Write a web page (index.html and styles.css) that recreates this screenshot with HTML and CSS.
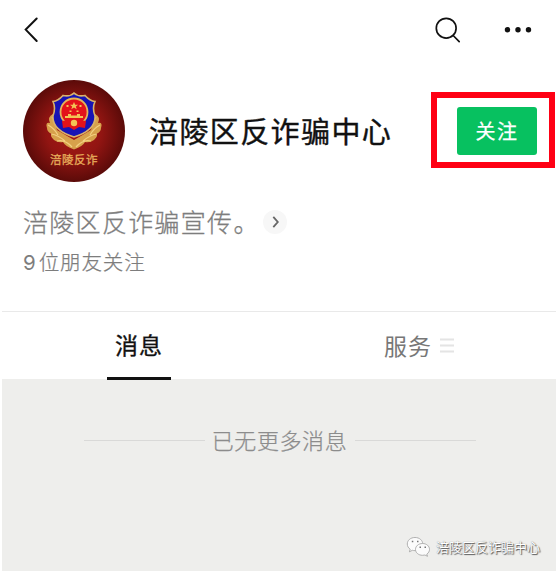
FILE: index.html
```html
<!DOCTYPE html>
<html lang="zh-CN">
<head>
<meta charset="utf-8">
<title>涪陵区反诈骗中心</title>
<link rel="stylesheet" href="styles.css">
</head>
<body>
<main class="page">
  <header class="navbar">
    <svg class="back" width="16" height="28" viewBox="0 0 16 28"><path d="M13.700 2.500 2.700 13.600 13.700 25"/></svg>
    <svg class="search" width="28" height="28" viewBox="0 0 28 28"><circle cx="12.200" cy="12.200" r="9.900"/><path d="m19.200 19.500 6 6.200"/></svg>
    <svg class="more" width="28" height="8" viewBox="0 0 28 8"><circle cx="3.500" cy="3.700" r="2.700"/><circle cx="14" cy="3.700" r="2.700"/><circle cx="24.500" cy="3.700" r="2.700"/></svg>
  </header>

  <section class="profile">
    <div class="avatar">
      <svg class="emblem" width="58" height="58" viewBox="0 0 58 58">
        <g class="wreath">
          <path d="M8 22Q2 25 5 31Q0 30 2 36Q2 40 7 42Q4 43 9 48Q13 51 18 50Q20 54 29 57.500Q38 54 40 50Q45 51 49 48Q54 43 51 42Q56 40 56 36Q58 30 53 31Q56 25 50 22L46 38 29 48 12 38Z"/>
          <path class="leaf" d="M3 33q6 3 10 10M6 42q7 1 14 7M12 49q8-2 15 6M55 33q-6 3-10 10M52 42q-7 1-14 7M46 49q-8-2-15 6M7 25q4 5 6 12M51 25q-4 5-6 12"/>
        </g>
        <path class="shield" d="M29 1Q33 5 40 3.500Q45 9 50 9.500Q47 16 50 24Q51 38 29 45Q7 38 8 24Q11 16 8 9.500Q13 9 18 3.500Q25 5 29 1Z"/>
        <circle class="disc" cx="29" cy="20" r="13.500"/>
        <path class="star" d="m29 10 1.200 2.700h2.900l-2.300 1.800.9 2.800-2.700-1.700-2.700 1.700.9-2.800-2.300-1.800h2.900Z"/>
        <path class="gold" d="M21.500 13h2v2h-2zm13 0h2v2h-2zM24.500 18.500h2V20h-2zm7 0h2V20h-2zM20 26v-2h3v-2h3v1.500h6V22h3v2h3v2z"/>
        <path class="ribbon" d="m17 29 7-1h10l7 1-1 7-6-1-5 3-5-3-6 1Z"/>
        <circle class="gear" cx="29" cy="31" r="3.200"/>
      </svg>
      <span class="avatar-text">涪陵反诈</span>
    </div>
    <h1 class="name">涪陵区反诈骗中心</h1>
    <div class="highlight"><button class="follow">关注</button></div>
  </section>

  <section class="about">
    <p class="desc"><span>涪陵区反诈骗宣传。</span><span class="expand"><svg width="24" height="24" viewBox="0 0 24 24"><path d="m10.300 6.800 4.500 5.200-4.500 5.200"/></svg></span></p>
    <p class="friends"><span class="count">9</span>位朋友关注</p>
  </section>

  <nav class="tabs">
    <a class="tab active">消息</a>
    <a class="tab services">服务<svg class="menu" width="14" height="15" viewBox="0 0 14 15"><path d="M0 1.500h14M0 7.500h14M0 13.500h14"/></svg></a>
  </nav>

  <section class="feed">
    <div class="empty"><span>已无更多消息</span></div>
    <div class="watermark">
      <svg width="26" height="22" viewBox="0 0 26 22">
        <path class="bubble" d="M9 1.500C4.500 1.500 1.300 4.300 1.300 8c0 2.200 1.100 4 2.900 5.200l-.8 2.600 3-1.500c.9.300 1.700.3 2.600.3 4.500 0 7.700-2.900 7.700-6.600S13.500 1.500 9 1.500Z"/>
        <path class="bubble" d="M16.500 7.500c-4 0-7 2.600-7 5.900s3 5.900 7 5.900c.9 0 1.700-.1 2.400-.3l2.600 1.300-.7-2.200c1.700-1.100 2.700-2.800 2.700-4.700 0-3.300-3-5.900-7-5.900Z"/>
        <path class="eyes" d="M5.800 5.500h1.500M11 5.500h1.500M13.500 11.300H15M18.500 11.300H20"/>
      </svg>
      <span>涪陵区反诈骗中心</span>
    </div>
  </section>
</main>
</body>
</html>
```
FILE: styles.css
```css
* { box-sizing: border-box; }
body {
  margin: 0;
  background: #fff;
  color: #111;
  font-family: "Noto Sans CJK SC", "Noto Sans", sans-serif;
}
svg { display: block; flex: none; }
h1, p { margin: 0; font-weight: 400; }
.page { width: 558px; height: 573px; padding: 0 2px 2px; overflow: hidden; }

.navbar { display: flex; align-items: center; height: 60px; padding: 0 24px 0 21px; }
.navbar svg { fill: none; stroke: #111; stroke-width: 2; stroke-linecap: round; }
.navbar .search { margin-left: auto; stroke-width: 1.700; }
.navbar .more { margin-left: 42px; fill: #111; stroke: none; }

.profile { display: flex; align-items: center; height: 143px; padding-left: 21px; }
.avatar {
  display: flex; flex-direction: column; align-items: center; flex: none;
  width: 102px; height: 102px; margin-bottom: 1px; padding-top: 12px; border-radius: 50%;
  background: radial-gradient(circle, #a71916 0%, #921512 38%, #5c0b09 70%, #390403 100%);
}
.emblem { height: 58px; }
.wreath { fill: #d7a14b; }
.leaf { fill: none; stroke: #f2cf80; stroke-width: 1.2; }
.shield { fill: #1713b4; stroke: #d9b26a; stroke-width: 1.6; }
.disc { fill: #e3121a; stroke: #e5b557; stroke-width: 1.8; }
.star, .gold, .gear { fill: #f3c455; }
.ribbon { fill: #e3121a; }
.avatar-text { color: #e7ad5b; font-size: 11.500px; font-weight: 400; line-height: 18px; letter-spacing: .5px; -webkit-text-stroke: .3px #e7ad5b; }
.name { margin: 0 0 3px 24px; font-size: 29px; line-height: 44px; letter-spacing: 1.400px; font-weight: 400; -webkit-text-stroke: .4px #111; white-space: nowrap; }
.highlight {
  display: flex; align-items: center; justify-content: center; flex: none;
  width: 124px; height: 76px; margin: 0 1px 3px auto; padding: 2px 0 0 7px; border: 6px solid #ff0014;
}
.follow {
  width: 80px; height: 48px; padding: 0 0 0 1px; border: 0; border-radius: 3px;
  background: #07c160; color: #fff; font: 400 20px/48px "Noto Sans CJK SC", sans-serif; letter-spacing: 1.500px; -webkit-text-stroke: .25px #fff;
}

.about { height: 108px; padding-left: 21px; color: #7d7d7d; }
.desc { display: flex; align-items: center; height: 38px; font-size: 25px; line-height: 38px; letter-spacing: 1.300px; font-weight: 300; -webkit-text-stroke: .3px #7d7d7d; }
.desc > span:first-child { margin-top: -2px; }
.expand { width: 24px; height: 24px; margin-left: 3px; border-radius: 50%; background: #f7f7f7; }
.expand path { fill: none; stroke: #666; stroke-width: 1.800; }
.friends { height: 40px; font-size: 20.500px; line-height: 40px; letter-spacing: .9px; font-weight: 300; -webkit-text-stroke: .25px #7d7d7d; }
.count { margin-right: 2px; font-family: Inter, sans-serif; font-weight: 400; -webkit-text-stroke: 0; }

.tabs { display: grid; grid-template-columns: 1fr 1fr; height: 68px; border-top: 1px solid #e9e9e9; }
.tab {
  display: flex; align-items: center; justify-self: center; height: 68px; padding-bottom: 2px;
  color: #777; font-size: 23px; line-height: 34px; letter-spacing: 1px; font-weight: 400;
}
.active { width: 64px; margin-right: 4px; padding: 0 0 1px 1px; justify-content: center; border-bottom: 3px solid #111; color: #111; -webkit-text-stroke: .35px #111; }
.services { margin-left: 3px; padding-bottom: 3px; }
.menu { margin: 2px 0 0 8px; fill: none; stroke: #e4e4e4; stroke-width: 2; }

.feed { display: flex; flex-direction: column; justify-content: space-between; height: 192px; padding: 41px 16px 13px 82px; background: #eeeeec; }
.empty { display: flex; align-items: center; gap: 8px; width: 392px; height: 40px; color: #8c8c8c; font-size: 22px; font-weight: 300; white-space: nowrap; letter-spacing: .6px; }
.empty span { margin: -2px 0 0 -1px; -webkit-text-stroke: .25px #8c8c8c; }
.empty::before, .empty::after { content: ""; flex: 1; height: 1px; background: #d9d9d8; }
.watermark { display: flex; align-items: center; align-self: flex-end; gap: 4px; height: 22px; color: #fff; font-size: 13px; text-shadow: 1px 1px 1px #555, 0 0 1px #777; }
.watermark span { margin-top: -2px; }
.bubble { fill: #fbfbfb; stroke: #a0a09f; stroke-width: .8; }
.eyes { fill: none; stroke: #777; stroke-width: 1.400; }
```
